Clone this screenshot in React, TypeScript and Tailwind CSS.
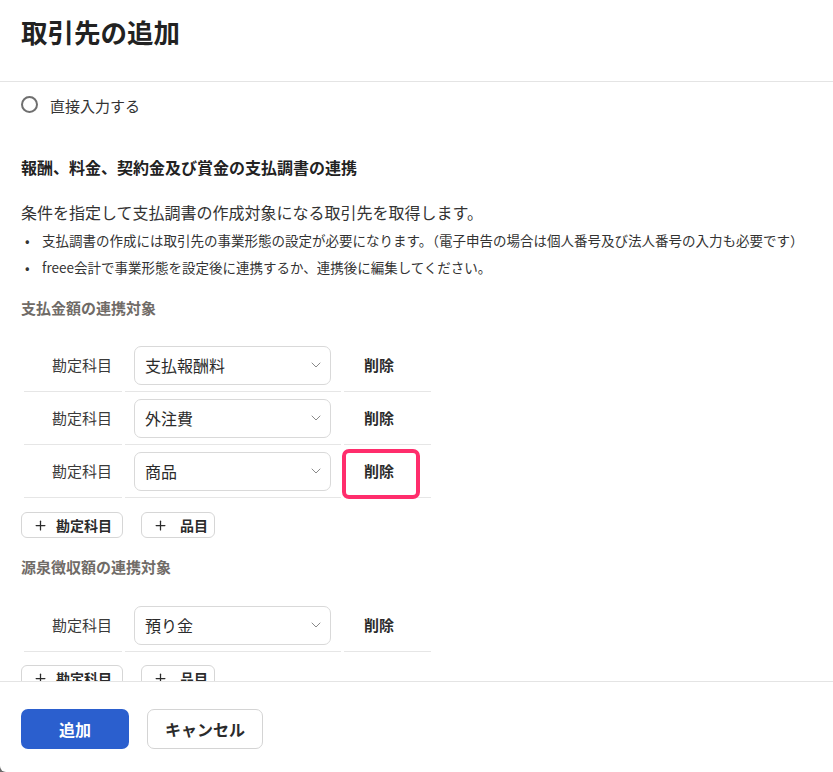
import { ChevronDown, Plus } from 'lucide-react';

const font = { fontFamily: '"Noto Sans CJK JP", "Noto Sans", sans-serif' };

function AccountRow({ value, highlight }: { value: string; highlight?: boolean }) {
  return (
    <tr>
      <td className="w-[98px] h-[53px] border-b border-[#e6e6e6] pr-[10px] text-right text-[15px] text-[#3a3a3a]">
        勘定科目
      </td>
      <td className="w-[216px] h-[53px] border-b border-[#e6e6e6] pl-[9px] pr-[10px]">
        <div className="flex h-[39px] items-center justify-between rounded-[7px] border border-[#d9d9d9] pl-[10px] pr-[6px] text-[16px] text-[#2b2b2b]">
          <span>{value}</span>
          <ChevronDown className="h-4 w-4 text-[#8a8a8a]" strokeWidth={1.5} />
        </div>
      </td>
      <td className="relative w-[87px] h-[53px] border-b border-[#e6e6e6] pl-[20px] text-left text-[15px] font-bold text-[#2b2b2b]">
        削除
        {highlight && (
          <div className="absolute left-[-2px] top-[4px] h-[50px] w-[78px] rounded-[7px] border-[4px] border-[#ff2d6c]" />
        )}
      </td>
    </tr>
  );
}

function AddButtons() {
  return (
    <div className="flex gap-[18px]">
      <button className="flex h-[26px] w-[102px] items-center gap-[8px] rounded-[6px] border border-[#d6d6d6] pl-[11px] text-[14px] font-bold text-[#2b2b2b]">
        <Plus className="h-[15px] w-[15px]" strokeWidth={2} />
        勘定科目
      </button>
      <button className="flex h-[26px] w-[74px] items-center gap-[8px] rounded-[6px] border border-[#d6d6d6] pl-[11px] text-[14px] font-bold text-[#2b2b2b]">
        <Plus className="h-[15px] w-[15px]" strokeWidth={2} />
        <span className="ml-[4px]">品目</span>
      </button>
    </div>
  );
}

export default function App() {
  return (
    <div className="h-[772px] w-[833px] bg-[#6a6a6a]" style={font}>
      <div className="flex h-full flex-col overflow-hidden rounded-bl-[6px] bg-white">
        <div className="h-[82px] shrink-0 border-b border-[#e4e4e4] pl-[21px] pt-[13px]">
          <h1 className="text-[26.5px] font-bold leading-[38px] text-[#222]">取引先の追加</h1>
        </div>

        <div className="h-[600px] shrink-0 overflow-hidden border-b border-[#e4e4e4] px-[21px]">
          <label className="mt-[12px] flex h-[24px] items-center gap-[12px] text-[15px] text-[#333]">
            <span className="mb-[4px] h-[17px] w-[17px] rounded-full border-[2px] border-[#6f6f6f]" />
            直接入力する
          </label>

          <h2 className="mt-[37px] text-[16px] font-bold leading-[24px] text-[#222]">
            報酬、料金、契約金及び賞金の支払調書の連携
          </h2>
          <p className="mt-[21px] text-[16px] leading-[24px] text-[#333]">
            条件を指定して支払調書の作成対象になる取引先を取得します。
          </p>
          <ul className="mt-[3px] text-[13.5px] leading-[27px] text-[#333]">
            <li className="flex">
              <span className="w-[21px] shrink-0 pl-[4px]">•</span>
              支払調書の作成には取引先の事業形態の設定が必要になります。（電子申告の場合は個人番号及び法人番号の入力も必要です）
            </li>
            <li className="flex">
              <span className="w-[21px] shrink-0 pl-[4px]">•</span>
              freee会計で事業形態を設定後に連携するか、連携後に編集してください。
            </li>
          </ul>

          <h3 className="mt-[16px] text-[15px] font-bold leading-[22px] text-[#706b67]">支払金額の連携対象</h3>
          <table className="mt-[20px] border-separate border-spacing-x-[3px] border-spacing-y-0">
            <tbody>
              <AccountRow value="支払報酬料" />
              <AccountRow value="外注費" />
              <AccountRow value="商品" highlight />
            </tbody>
          </table>
          <div className="mt-[14px]">
            <AddButtons />
          </div>

          <h3 className="mt-[18px] text-[15px] font-bold leading-[22px] text-[#706b67]">源泉徴収額の連携対象</h3>
          <table className="mt-[21px] border-separate border-spacing-x-[3px] border-spacing-y-0">
            <tbody>
              <AccountRow value="預り金" />
            </tbody>
          </table>
          <div className="mt-[13px]">
            <AddButtons />
          </div>
        </div>

        <div className="flex gap-[18px] px-[21px] pt-[27px]">
          <button className="h-[40px] w-[108px] rounded-[7px] bg-[#2b5fce] text-[16px] font-bold text-white">追加</button>
          <button className="h-[40px] w-[116px] rounded-[7px] border border-[#d4d4d4] text-[16px] font-bold text-[#2b2b2b]">
            キャンセル
          </button>
        </div>
      </div>
    </div>
  );
}
